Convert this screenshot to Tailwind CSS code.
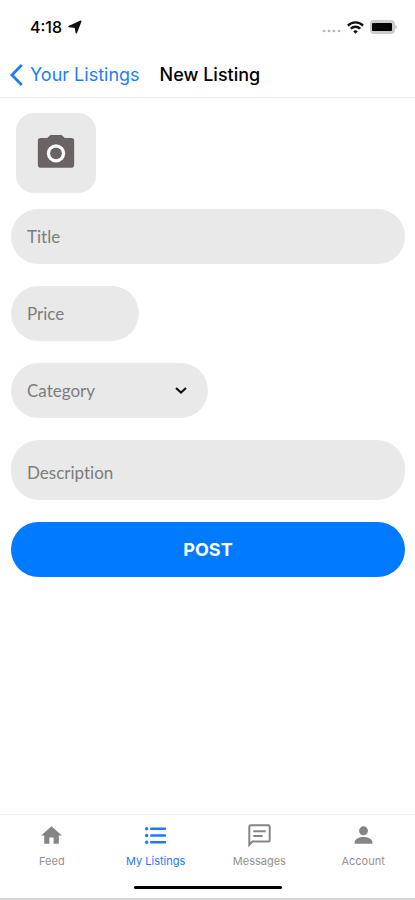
<!DOCTYPE html>
<html lang="en">
<head>
<meta charset="utf-8">
<meta name="viewport" content="width=device-width, initial-scale=1">
<title>New Listing</title>
<script src="https://cdn.jsdelivr.net/npm/@tailwindcss/browser@4"></script>
</head>
<body class="flex min-h-screen flex-col border-b-2 border-[#d4d4d4] bg-white font-[Inter,'Liberation_Sans',sans-serif] text-black">

<div class="flex h-[50px] items-center justify-between pt-1 pr-[18px] pl-[30px]">
  <div class="flex items-center gap-[6px] text-base font-medium">
    <span>4:18</span>
    <svg class="size-[14px]" viewBox="0 0 14 14" aria-hidden="true"><path d="M12.800 1.200 8.300 12.600 7.300 7.200.9 6.600z" fill="#111" stroke="#111" stroke-width="1.500" stroke-linejoin="round"/></svg>
  </div>
  <div class="flex items-center gap-[6px]">
    <svg class="h-3 w-[19px]" viewBox="0 0 19 12" fill="#b5b5b5" aria-hidden="true"><circle cx="2" cy="10" r="1.3"/><circle cx="7" cy="10" r="1.3"/><circle cx="12" cy="10" r="1.3"/><circle cx="17" cy="10" r="1.3"/></svg>
    <svg class="h-[13px] w-[17px]" viewBox="0 0 17 13" fill="none" stroke="#111" stroke-width="2.3" aria-hidden="true"><path d="M.9 4.6a10.7 10.7 0 0 1 15.2 0M3.8 7.7a6.6 6.6 0 0 1 9.4 0"/><path d="M8.5 12.8 6.3 10.4a3.1 3.1 0 0 1 4.4 0z" fill="#111" stroke="none"/></svg>
    <svg class="h-[14px] w-[27px]" viewBox="0 0 27 14" aria-hidden="true"><rect width="25" height="14" rx="4" fill="#ccc"/><rect x="2" y="3" width="20" height="8" rx="1" fill="#000"/><path d="M25.5 5a2.4 2.4 0 0 1 0 4z" fill="#999"/></svg>
  </div>
</div>

<header class="flex h-12 items-center gap-5 border-b border-[#f0f0f0] pt-[2px] pl-[10px] text-lg">
  <a href="#" class="flex items-center gap-[7px] text-[#1f7cf5]">
    <svg class="h-[22px] w-[13px]" viewBox="0 0 13 22" fill="none" stroke="currentColor" stroke-width="2.8" aria-hidden="true"><path d="M11.8 1 1.900 11l9.900 10"/></svg>
    <span>Your Listings</span>
  </a>
  <h1 class="font-medium">New Listing</h1>
</header>

<main class="flex-1 pt-[15px] pr-[10px] pl-[11px]">
  <form class="flex flex-col items-start gap-[22px] font-[Lato,'Open_Sans',sans-serif] text-[17px] text-[#7c7c7c] [font-variant-ligatures:none]">
    <button type="button" aria-label="Add photo" class="-mb-[6px] ml-[5px] flex size-20 items-center justify-center rounded-[18px] bg-[#e9e9e9]">
      <svg class="size-11" viewBox="0 0 24 24" fill="#696463" aria-hidden="true"><path d="M9 2.200 7.170 3.800H3.500c-.9 0-1.400.6-1.400 1.400v13.400c0 .9.5 1.400 1.400 1.400h17c.9 0 1.400-.5 1.400-1.400V5.200c0-.8-.5-1.400-1.400-1.400h-3.670L15 2.200H9z"/><circle cx="12" cy="12.200" r="5" fill="#fff"/><circle cx="12" cy="12.200" r="3.200"/></svg>
    </button>
    <input type="text" aria-label="Title" placeholder="Title" class="h-[55px] w-full rounded-[28px] bg-[#e9e9e9] px-4 outline-none placeholder:text-[#7c7c7c]">
    <input type="text" inputmode="decimal" aria-label="Price" placeholder="Price" class="h-[55px] w-32 rounded-[28px] bg-[#e9e9e9] px-4 outline-none placeholder:text-[#7c7c7c]">
    <div class="grid w-[197px] items-center">
      <select aria-label="Category" class="col-start-1 row-start-1 h-[55px] w-full appearance-none rounded-[28px] bg-[#e9e9e9] px-4 outline-none">
        <option>Category</option>
      </select>
      <svg class="pointer-events-none col-start-1 row-start-1 mr-[21px] h-[7px] w-3 justify-self-end" viewBox="0 0 12 7" fill="none" stroke="#111" stroke-width="2" aria-hidden="true"><path d="M1 1l5 4.600L11 1"/></svg>
    </div>
    <textarea aria-label="Description" placeholder="Description" rows="1" class="block h-[60px] w-full resize-none rounded-[28px] bg-[#e9e9e9] px-4 pt-5 outline-none placeholder:text-[#7c7c7c]"></textarea>
    <button type="submit" class="h-[55px] w-full rounded-[28px] bg-[#007aff] font-[Inter,'Liberation_Sans',sans-serif] text-lg font-bold text-white">POST</button>
  </form>
</main>

<footer class="border-t border-[#f2f2f2] pt-2 pb-[9px]">
  <nav class="grid grid-cols-4 text-[11px] leading-4 text-[#929292]">
    <a href="#" class="flex flex-col items-center gap-[5px]">
      <svg class="size-[25px]" viewBox="0 0 24 24" fill="#858585" aria-hidden="true"><path d="M10 20v-6h4v6h5v-8h3L12 3 2 12h3v8z"/></svg>
      Feed
    </a>
    <a href="#" aria-current="page" class="flex flex-col items-center gap-[5px] text-[#1f78f5]">
      <svg class="size-[25px]" viewBox="0 0 24 24" fill="currentColor" aria-hidden="true"><circle cx="3.500" cy="5.500" r="1.600"/><circle cx="3.500" cy="12" r="1.600"/><circle cx="3.500" cy="18.500" r="1.600"/><path d="M7 4.300h15v2.400H7zM7 10.800h15v2.400H7zM7 17.300h15v2.400H7z"/></svg>
      My Listings
    </a>
    <a href="#" class="flex flex-col items-center gap-[5px]">
      <svg class="size-[25px]" viewBox="0 0 24 24" fill="none" stroke="#858585" stroke-width="1.900" aria-hidden="true"><path d="M2.200 21V3.500c0-.8.5-1.300 1.300-1.300h17c.8 0 1.300.5 1.300 1.300v13c0 .8-.5 1.300-1.300 1.300H5.200zM6 8h12M6 12.400h9"/></svg>
      Messages
    </a>
    <a href="#" class="flex flex-col items-center gap-[5px]">
      <svg class="size-[25px]" viewBox="0 0 24 24" fill="#858585" aria-hidden="true"><circle cx="12" cy="7.500" r="4.300"/><path d="M3.500 20v-1.500c0-3.400 5-5 8.500-5s8.500 1.600 8.500 5V20z"/></svg>
      Account
    </a>
  </nav>
  <div class="mx-auto mt-[17px] h-[3px] w-[148px] rounded-full bg-black"></div>
</footer>
</body>
</html>
